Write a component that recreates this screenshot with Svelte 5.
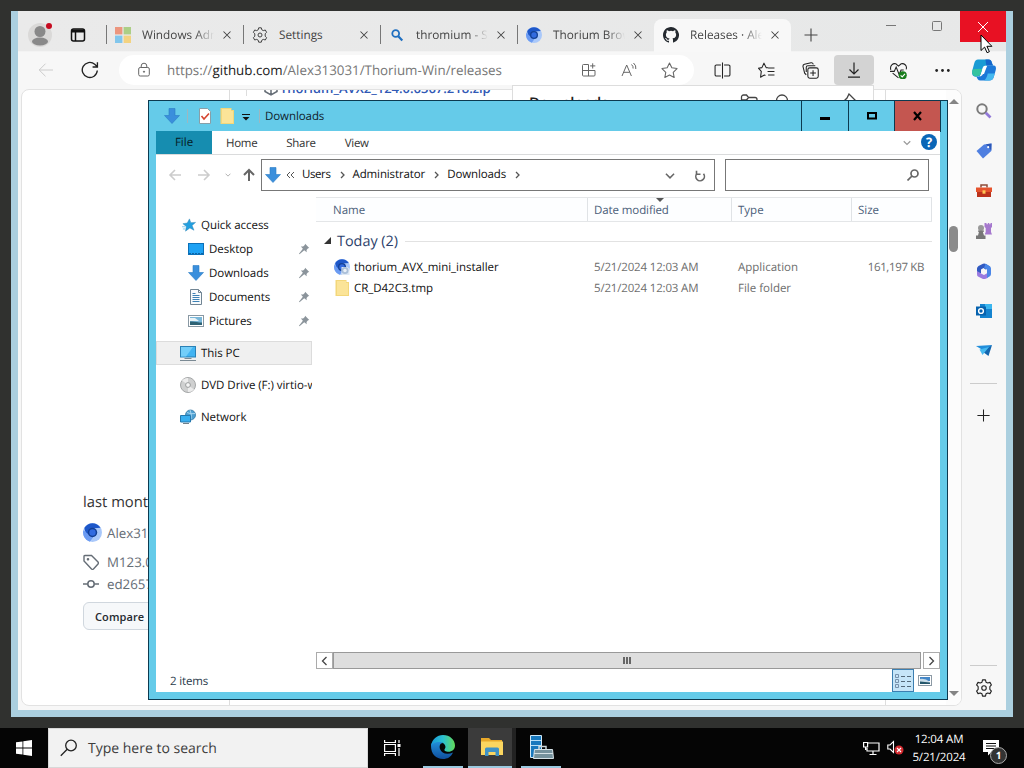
<script>
  const tabs = [
    { title: 'Windows Adm', icon: 'windows' },
    { title: 'Settings', icon: 'gear' },
    { title: 'thromium - Se', icon: 'bing' },
    { title: 'Thorium Brow', icon: 'thorium' },
    { title: 'Releases · Ale', icon: 'github', active: true }
  ];

  const sidebarApps = ['search', 'tag', 'toolbox', 'games', 'office', 'outlook', 'drop'];

  const quickAccess = [
    { label: 'Desktop', icon: 'desktop' },
    { label: 'Downloads', icon: 'arrow' },
    { label: 'Documents', icon: 'document' },
    { label: 'Pictures', icon: 'picture' }
  ];

  const places = [
    { label: 'This PC', icon: 'pc', selected: true },
    { label: 'DVD Drive (F:) virtio-win', icon: 'disc' },
    { label: 'Network', icon: 'network' }
  ];

  const crumbs = ['Users', 'Administrator', 'Downloads'];

  const files = [
    { name: 'thorium_AVX_mini_installer', date: '5/21/2024 12:03 AM', type: 'Application', size: '161,197 KB', icon: 'installer' },
    { name: 'CR_D42C3.tmp', date: '5/21/2024 12:03 AM', type: 'File folder', size: '', icon: 'folder' }
  ];
</script>

{#snippet icon(name, size = 16)}
  <svg class="icon" width={size} height={size} viewBox="0 0 16 16" fill="none" stroke="currentColor">
    {#if name === 'windows'}
      <g stroke="none" opacity="0.65">
        <path fill="#ee6a45" d="M0 0h7.4v7.4H0z" /><path fill="#8cc152" d="M8.6 0H16v7.4H8.6z" />
        <path fill="#4bb4ee" d="M0 8.6h7.4V16H0z" /><path fill="#f9c74a" d="M8.6 8.6H16V16H8.6z" />
      </g>
    {:else if name === 'gear'}
      <circle cx="8" cy="8" r="2" />
      <path d="M6.7.8h2.6l.5 2 1.5.8 2-.6 1.3 2.3L13.2 6.8v2.4l1.4 1.5-1.3 2.300-2-.6-1.500.8-.5 2H6.700l-.5-2-1.500-.8-2 .6-1.300-2.300 1.400-1.500V6.800L1.400 5.300 2.700 3l2 .6 1.500-.8z" stroke-linejoin="round" />
    {:else if name === 'bing'}
      <g stroke="#1f6fc0" stroke-width="1.8"><circle cx="6.7" cy="6.5" r="3.4" /><path d="M9.3 9.2l4 4.2" stroke-width="2.2" /></g>
    {:else if name === 'thorium' || name === 'installer'}
      <g stroke="none">
        <circle cx="8" cy="8" r="8" fill="#a9c8fa" />
        <path fill="#1d57c9" d="M1.2 4A8 8 0 0 1 14.8 4L9 4.5A4 4 0 0 0 5 10.5 8 8 0 0 1 1.2 4z" />
        <path fill="#6b9bf2" d="M.3 6a8 8 0 0 0 5.5 9.7L8.5 12 4.5 9.5z" />
        <circle cx="8" cy="8" r="4" fill="#123f94" /><circle cx="8" cy="8" r="2.7" fill="#326be0" />
        {#if name === 'installer'}
          <path fill="#dfe9f5" d="M7.5 8h6l2 2v6h-8z" />
          <circle cx="11" cy="11.5" r="3.5" fill="#aabfd8" /><circle cx="11" cy="11.5" r="1.7" fill="#e9f0f8" />
        {/if}
      </g>
    {:else if name === 'github'}
      <path fill="#24292f" stroke="none" d="M8 0C3.580 0 0 3.580 0 8c0 3.540 2.290 6.530 5.470 7.590.4.070.550-.170.550-.380 0-.190-.010-.820-.010-1.490-2.010.370-2.530-.490-2.690-.940-.090-.230-.480-.940-.820-1.130-.280-.150-.680-.520-.010-.530.630-.010 1.080.580 1.230.820.720 1.210 1.870.870 2.330.660.070-.520.280-.870.510-1.070-1.780-.200-3.640-.890-3.640-3.950 0-.870.310-1.590.820-2.150-.080-.200-.360-1.020.080-2.120 0 0 .670-.210 2.200.820a7.600 7.600 0 0 1 4 0c1.530-1.040 2.200-.820 2.200-.820.440 1.100.160 1.920.080 2.120.510.560.820 1.270.820 2.150 0 3.070-1.870 3.750-3.650 3.950.290.250.540.730.540 1.480 0 1.070-.010 1.930-.010 2.200 0 .210.150.460.550.380A8 8 0 0 0 8 0z" />
    {:else if name === 'close'}
      <path d="M4 4l8 8M12 4l-8 8" stroke-width="1.200" />
    {:else if name === 'plus'}
      <path d="M8 1.5v13M1.5 8h13" stroke-width="1.100" />
    {:else if name === 'back'}
      <path d="M15 8H1.200M7.500 1.700L1.200 8l6.300 6.300" />
    {:else if name === 'reload'}
      <path d="M14.5 8.5a6.700 6.700 0 1 1-2.300-5.600l2.100 2M14.600 1v4.300h-4.300" stroke-width="1.200" />
    {:else if name === 'lock'}
      <path d="M5.2 5.500V4a2.800 2.800 0 0 1 5.600 0v1.500" /><rect x="2.7" y="5.5" width="10.6" height="8.5" rx="1.5" /><circle cx="8" cy="9.7" r=".6" fill="currentColor" />
    {:else if name === 'apps'}
      <path d="M7.500 2.500H2.500a1 1 0 0 0-1 1v9.500a1 1 0 0 0 1 1h10.500a1 1 0 0 0 1-1V8.500H1.500M7.500 2.500V14M11.700 1.300v5.200M9.100 3.900h5.200" />
    {:else if name === 'read'}
      <path d="M1 14L5.700 3l4.700 11M2.700 10.300h6M10.500 2.500q2 1.800 1.600 4M12.500 1q3 2.600 2.300 6" />
    {:else if name === 'star'}
      <path d="M8 1l2.200 4.500 4.900.7-3.600 3.500.9 4.900L8 12.300l-4.400 2.300.9-4.900L.9 6.200l4.900-.7z" stroke-linejoin="round" />
    {:else if name === 'split'}
      <path d="M6.500 2.800H2.200A1.200 1.200 0 0 0 1 4v8a1.200 1.200 0 0 0 1.200 1.200h4.300M9.500 2.800h4.300A1.200 1.200 0 0 1 15 4v8a1.200 1.200 0 0 1-1.200 1.200H9.500M8 .5v15" />
    {:else if name === 'favorites'}
      <path d="M9.500 5.500L7.700 5.300 5.600 1.100 3.700 5.300l-3.300.5 2.700 3L2.400 14.300 6 12.200l1 .5M9.500 5.700h6M9 9h6.500M9.500 12.300h6" stroke-linejoin="round" />
    {:else if name === 'collections'}
      <rect x="5.5" y="5.5" width="9.8" height="9.8" rx="1.8" /><path d="M10.400 7.700v5.400M7.700 10.400h5.400M4 12L2.500 10.500 1 4.500Q.6 2.700 2.300 2.200L8.500.7Q10 .4 10.700 2.200M4 9.500V5Q4 3.500 5.500 3.500H12.500" />
    {:else if name === 'download'}
      <path d="M8 .5v11.300M3.500 7.500L8 12l4.500-4.500M2 15.200h12" stroke-width="1.200" />
    {:else if name === 'heart'}
      <path d="M.8 7.500C-.5 3 3 1 5.500 1.700L8 3.800l2.500-2.100C13 1 16.500 3 15.200 7M2.500 10.500L8 15M0 8.800h4l1.800-4 2.800 7 1.800-4.200h2.500" />
      <circle cx="12" cy="12.5" r="3.8" fill="#187d1c" stroke="none" /><path stroke="#fff" d="M10 12.500l1.500 1.500 2.600-2.800" />
    {:else if name === 'more'}
      <g fill="currentColor" stroke="none"><circle cx="2.500" cy="8" r="1.300" /><circle cx="8" cy="8" r="1.300" /><circle cx="13.500" cy="8" r="1.300" /></g>
    {:else if name === 'copilot'}
      <g stroke="none">
        <path fill="#199bd4" d="M4 1h7c1.500 0 2 1 2.300 2.300L14 5H9.500C7 5 7 7 6.300 9.500 5.500 12 5 12.500 3 12.500 0 12.500-.3 10.500.3 8L1.500 3.500C2 1.800 2.700 1 4 1z" />
        <path fill="#34c3a0" d="M.3 8c.6-1 2.500-.5 4.500-.8L6.800 7.500 5.300 11.500C1 13.500-.4 11 .3 8z" />
        <path fill="#1465cc" d="M9 1h2c1.500 0 2 1 2.300 2.300L14 5H9.500z" />
        <path fill="#1b78d8" d="M10 5h4.500c1.500 0 1.700 1.500 1.300 3.200l-1.300 4.500c-.4 1.600-1.500 2.300-3 2.300H5.500c-1.500 0-2-1.300-2.500-2.500 2.500 0 4-.3 4.800-3z" />
        <path fill="#45b9ef" d="M10.500 10.300h4.700l-.7 2.400c-.4 1.600-1.500 2.300-3 2.300H8c1.500-1 2-2.700 2.500-4.700z" />
        <path fill="#fff" d="M8 5.300h2L8 10.700H6z" />
      </g>
    {:else if name === 'search'}
      <circle cx="6" cy="6" r="4.700" stroke="#7b7b7b" stroke-width="2" /><path d="M9.700 9.700l4.800 4.800" stroke="#9279d8" stroke-width="2.700" />
    {:else if name === 'tag'}
      <path fill="#4f7fe0" stroke="none" d="M8 1.500L15.500.5 15.300 8 7 15.500.5 8z" /><path fill="#2c58b8" stroke="none" d="M10 1.200l5.500-.7-.2 7z" /><circle cx="12.200" cy="4.200" r="1.100" fill="#fff" stroke="none" />
    {:else if name === 'toolbox'}
      <path d="M5 4.500V2h6v2.500" stroke="#8e4b38" stroke-width="1.500" /><path fill="#e5532d" stroke="none" d="M0 4.500h16V9H0z" /><path fill="#bb321c" stroke="none" d="M1 9h14v5H1z" /><path fill="#ffc655" stroke="none" d="M6.500 7.300h3v3.400h-3z" />
    {:else if name === 'games'}
      <g stroke="none"><path fill="#a678ce" d="M8.500 0h2v1.200h1.300V0h1.500v1.200h1.200V0H16v4l-1 1v4l1 2.500H8.700l1-2.500V5L8.500 4z" /><circle cx="5" cy="5" r="3" fill="#999" /><path fill="#777" d="M2 7.500h6v1.300H6.800L8 12.500h1.500V16H0v-3.500h2l1-3.700H2z" /></g>
    {:else if name === 'office'}
      <g stroke="none"><path fill="#315ac1" d="M1 9V5.500Q1 4 2.500 3L7 .7Q8.500 0 10 1l4.500 3-5 2.500L7.500 5 5 6.500v4z" /><path fill="#9a7be0" d="M1 8l4 2.500L8 12l3.500-2V15L9 16H7l-5-2.500Q1 13 1 11z" /><path fill="#4a86e8" d="M9.500.7l4 2.300Q15 4 15 5.500V11q0 1.500-1.500 2.500L11 15V6.500L8 5z" /></g>
    {:else if name === 'outlook'}
      <g stroke="none"><path fill="#3ab6ef" d="M4 1h12v14H4z" /><path fill="#1483cf" d="M4 1h5v5h7v9H4z" /><path fill="#0662ae" d="M0 3.500h10v9H0z" /></g><circle cx="5" cy="8" r="2.400" stroke="#fff" stroke-width="1.400" />
    {:else if name === 'drop'}
      <g stroke="none"><path fill="#218edb" d="M0 3l16-1-6 7z" /><path fill="#1265ae" d="M16 2l-3.500 11-5.500-4z" /><path fill="#46b9f0" d="M3.500 6.500L13 4l-6.500 8z" /></g>
    {:else if name === 'arrow'}
      <path fill="#3a8fdc" stroke="#2a7cc5" stroke-width=".6" d="M5 .5h6v7h4.500L8 15.500.5 7.500H5z" />
    {:else if name === 'desktop'}
      <rect x=".5" y="2.500" width="15" height="11" fill="#1ea2f4" stroke="#0b70b8" /><path d="M1 12.500h14" stroke="#0d65a6" stroke-dasharray="2 1" />
    {:else if name === 'document'}
      <path fill="#f8fbfd" stroke="#718594" d="M2.500.5h8l3 3v12h-11z" /><path stroke="#3e82b6" d="M4.500 4.500h3M4.500 6.500h7M4.500 8.500h7M4.500 10.500h7M4.500 12.500h7" /><path stroke="#718594" d="M10.500.5v3h3" />
    {:else if name === 'picture'}
      <rect x=".5" y="2.500" width="15" height="11" fill="#fff" stroke="#8998a3" /><path fill="#79b6d8" stroke="none" d="M2 4h12v8H2z" /><path fill="#e9f3f7" stroke="none" d="M2 5h5l4 3H2z" /><path fill="#2e6274" stroke="none" d="M2 8.500c5-.5 7 1 12 1V12H2z" />
    {:else if name === 'pc'}
      <rect x=".5" y="1.500" width="15" height="10.500" fill="#42b4f2" stroke="#2b81b5" /><path fill="#73cef9" stroke="none" d="M1 2h12L6 11.500H1z" /><path stroke="#7b8a94" d="M4.500 13.500h7M0 15.500h16" />
    {:else if name === 'disc'}
      <circle cx="8" cy="8" r="7.500" fill="#cfd0d0" stroke="#a5a7a8" /><path fill="#ececec" stroke="none" d="M8 8L2 3.500A7 7 0 0 1 8 1zM8 8l6 4.500A7 7 0 0 1 8 15z" /><circle cx="8" cy="8" r="2.400" fill="#f6f6f6" stroke="#9b9d9e" />
    {:else if name === 'network'}
      <circle cx="10.500" cy="6" r="5" fill="#4ea0d2" stroke="#3579a5" stroke-width=".8" /><path stroke="#a9d6f0" d="M7 3.500q4 2 8 1M10 1q2 4 1 9" /><path fill="#39aff0" stroke="#2578ae" d="M.5 6.500h10v6.500H.5z" /><path stroke="#70818c" d="M3 14.500h6" />
    {:else if name === 'quick'}
      <path fill="#239fdf" stroke="#2680b3" stroke-width=".5" d="M8.500 1l1.600 4.300 5.400-.3-4 3.500 2.200 5.500-4.700-2.600L4 15l1-5.300L1 6.500l5-.8z" /><path stroke="#7fc7eb" d="M0 10h4M1 12.500h3" />
    {:else if name === 'folder'}
      <path fill="#f3d77a" stroke="none" d="M1.500 0h11v2H15v14h-13.500z" /><path fill="#fbe498" stroke="none" d="M3 1h9v2h2v12H3z" />
    {:else if name === 'properties'}
      <path fill="#fff" stroke="#889fa8" d="M2.500.5h8l3 3v12h-11z" /><path stroke="#d6442f" stroke-width="1.600" d="M4.500 8l2.500 3 5-5.500" />
    {:else if name === 'pin'}
      <path fill="#8b949b" stroke="none" d="M9.500 1l5.500 5.500-1.600.5-2 2.200.2 3L8.300 9.500 2 15l-.7-.7L6.500 7.500 3.800 4.600l3-.1 2.200-2z" />
    {:else if name === 'chevron'}
      <path d="M3.500 5.500L8 10l4.500-4.500" stroke-width="2" />
    {:else if name === 'chevron-wide'}
      <path d="M1.500 4.500L8 11l6.500-6.500" stroke-width="2.400" />
    {/if}
  </svg>
{/snippet}

<div class="desktop">
  <div class="browser">
    <div class="tabstrip">
      <span class="avatar">
        <svg width="26" height="26" viewBox="0 0 26 26">
          <circle cx="13" cy="13" r="12" fill="#dad9d8" />
          <circle cx="13" cy="9.500" r="5.500" fill="#898989" /><ellipse cx="13" cy="19.500" rx="8" ry="4" fill="#898989" />
          <circle cx="22" cy="4" r="3" fill="#c60b20" />
        </svg>
      </span>
      <svg class="workspaces" width="16" height="16" viewBox="0 0 16 16" fill="none" stroke="#111" stroke-width="1.500">
        <rect x="1.500" y="2" width="13" height="12" rx="2" /><path d="M2 4h12" stroke-width="3" /><path d="M5.500 5v9" />
      </svg>
      {#each tabs as tab}
        <div class="tab" class:active={tab.active}>
          {@render icon(tab.icon)}
          <span class="tab-title" class:whole={tab.title === 'Settings'}>{tab.title}</span>
          {@render icon('close', 14)}
        </div>
      {/each}
      <span class="new-tab">{@render icon('plus')}</span>
      <div class="window-buttons">
        <span><svg width="12" height="12" stroke="#777"><path d="M1 4.500h10" /></svg></span>
        <span><svg width="12" height="12" fill="none" stroke="#777"><rect x="1.500" y="0.500" width="9" height="9" rx="1" /></svg></span>
        <span class="close-red"><svg width="12" height="12" stroke="#fff"><path d="M1 1l10 10M11 1L1 11" /></svg></span>
      </div>
    </div>

    <div class="toolbar">
      <span class="tool back">{@render icon('back')}</span>
      <span class="tool reload">{@render icon('reload', 18)}</span>
      <div class="omnibox">
        {@render icon('lock')}
        <span class="url">https://<b>github.com</b>/Alex313031/Thorium-Win/releases</span>
        <span class="omni-actions">
          {@render icon('apps')}
          {@render icon('read')}
          {@render icon('star', 17)}
        </span>
      </div>
      <div class="tools">
        {#each ['split', 'favorites', 'collections', 'download', 'heart', 'more'] as tool}
          <span class="tool" class:pressed={tool === 'download'}>{@render icon(tool, tool === 'download' ? 16 : 17)}</span>
        {/each}
      </div>
      <span class="copilot">{@render icon('copilot', 24)}</span>
    </div>

    <div class="browser-body">
      <div class="page">
        <aside class="release-meta">
          <div class="age">last month</div>
          <div class="meta author">{@render icon('thorium', 19)}<span>Alex313031</span></div>
          <div class="meta tagged">
            <svg width="16" height="16" viewBox="0 0 16 16" fill="none" stroke="#656d76" stroke-width="1.400"><path d="M1 2.500V7l7.500 8q1 .8 2 0l4.500-5q.7-1 0-2L8.500 1.500H2.500Q1 1.300 1 2.500z" /><circle cx="5" cy="5.300" r=".6" /></svg>
            <span>M123.0.6312.133</span>
          </div>
          <div class="meta commit">
            <svg width="16" height="16" viewBox="0 0 16 16" fill="none" stroke="#656d76" stroke-width="1.500"><circle cx="8" cy="8" r="3.200" /><path d="M0 8h4.800M11.200 8H16" /></svg>
            <span>ed26573</span>
          </div>
          <button class="compare">Compare</button>
        </aside>
        <main class="release">
          <div class="assets">
            <svg width="16" height="16" viewBox="0 0 16 16" fill="none" stroke="#656d76" stroke-width="1.500"><path d="M8 1l6 3.500v7L8 15l-6-3.500v-7zM2 4.500L8 8l6-3.500M8 8v7" /></svg>
            <span class="asset-link">Thorium_AVX2_124.0.6367.218.zip</span>
          </div>
        </main>
        <div class="page-scroll">
          <i class="scroll-up"></i>
          <i class="thumb"></i>
          <i class="scroll-down"></i>
        </div>
      </div>
      <nav class="app-bar">
        {#each sidebarApps as app}
          <span class="app">{@render icon(app)}</span>
        {/each}
        <hr class="first" />
        <span class="app">{@render icon('plus', 15)}</span>
        <hr class="last" />
        <span class="app settings">{@render icon('gear', 18)}</span>
      </nav>
    </div>

    <div class="flyout">
      <span>Downloads</span>
      <svg class="fly-folder" width="18" height="16" fill="none" stroke="#444" stroke-width="1.300"><path d="M1.500 3a2 2 0 0 1 2-2h3l2 2.500h6.500a2 2 0 0 1 2 2V14h-15.500zM1.500 6h5l2-2.500" /></svg>
      <svg class="fly-search" width="14" height="16" fill="none" stroke="#444" stroke-width="1.300"><circle cx="7" cy="6.500" r="5.500" /></svg>
      <svg class="fly-pin" width="14" height="16" fill="none" stroke="#444" stroke-width="1.300"><path d="M1 8l3-3 2-4 6 6-3 3" /></svg>
    </div>
  </div>

  <div class="explorer">
    <div class="titlebar">
      {@render icon('arrow')}
      <i class="sep"></i>
      {@render icon('properties')}
      {@render icon('folder')}
      <svg class="menu-caret" width="8" height="8"><path d="M0 1.500h8" stroke="#111" /><path d="M.5 4h7L4 7.500z" fill="#111" /></svg>
      <i class="sep"></i>
      <span class="title">Downloads</span>
      <div class="caption-buttons">
        <span class="min"><svg width="12" height="10"><path d="M1 7.500h10" stroke="#000" stroke-width="3" /></svg></span>
        <span class="max"><svg width="12" height="10" fill="none"><rect x="2" y="2" width="8" height="5.500" stroke="#000" stroke-width="2" /></svg></span>
        <span class="close"><svg width="12" height="10"><path d="M2 1l7 8M9 1L2 9" stroke="#000" stroke-width="2.200" /></svg></span>
      </div>
    </div>

    <div class="content">
      <div class="menu">
        <span class="file">File</span>
        <span class="home">Home</span>
        <span class="share">Share</span>
        <span class="view">View</span>
        <span class="expand">{@render icon('chevron-wide', 8)}</span>
        <span class="help">?</span>
      </div>

      <div class="nav-row">
        <svg width="14" height="12" fill="none" stroke="#ccc" stroke-width="1.600"><path d="M13 6H2M7 1L2 6l5 5" /></svg>
        <svg class="forward" width="14" height="12" fill="none" stroke="#ccc" stroke-width="1.600"><path d="M1 6h11M7 1l5 5-5 5" /></svg>
        <span class="history">{@render icon('chevron-wide', 6)}</span>
        <svg class="parent" width="12" height="14" fill="none" stroke="#666" stroke-width="2"><path d="M6 13V2M1 7l5-5 5 5" /></svg>
        <div class="address">
          {@render icon('arrow')}
          <svg class="laquo" width="9" height="8" fill="none" stroke="#555"><path d="M4 1L1 4l3 3M8 1L5 4l3 3" /></svg>
          {#each crumbs as crumb}
            <span class="crumb">{crumb}</span>
            <svg class="crumb-arrow" width="6" height="8" fill="none" stroke="#555" stroke-width="1.300"><path d="M1 1l3 3-3 3" /></svg>
          {/each}
          <span class="addr-right">
            {@render icon('chevron-wide', 10)}
            <svg width="12" height="12" fill="none" stroke="#666" stroke-width="1.600"><path d="M3 3.500a4.300 4.300 0 1 0 6.500.3M2.500.800v3.500h4" /></svg>
          </span>
        </div>
        <div class="search-box">
          <svg width="12" height="12" fill="none" stroke="#666" stroke-width="1.700"><circle cx="7.500" cy="4.500" r="3.500" /><path d="M5 7l-4.500 4.500" /></svg>
        </div>
      </div>

      <div class="panes">
        <nav class="tree">
          <div class="node">{@render icon('quick', 14)}<span class="label">Quick access</span></div>
          {#each quickAccess as item}
            <div class="node child">
              {@render icon(item.icon)}
              <span class="label">{item.label}</span>
              <span class="pin">{@render icon('pin', 12)}</span>
            </div>
          {/each}
          {#each places as place}
            <div class="node place" class:selected={place.selected}>
              {@render icon(place.icon)}
              <span class="label">{place.label}</span>
            </div>
          {/each}
        </nav>

        <div class="list">
          <div class="columns header">
            <span>Name</span>
            <span class="sorted">Date modified</span>
            <span>Type</span>
            <span>Size</span>
          </div>
          <div class="group">
            <svg width="7" height="7"><path d="M7 0v7H0z" fill="#333" /></svg>
            <span>Today (2)</span>
            <i></i>
          </div>
          {#each files as file}
            <div class="columns row">
              <span class="name">{@render icon(file.icon)}<span class="filename">{file.name}</span></span>
              <span class="date">{file.date}</span>
              <span>{file.type}</span>
              <span class="size">{file.size}</span>
            </div>
          {/each}
          <div class="hscroll">
            <span class="arrow-btn"><svg width="7" height="10" fill="none" stroke="#444" stroke-width="1.300"><path d="M5.500 1l-4 4 4 4" /></svg></span>
            <span class="bar"><i></i><i></i><i></i></span>
            <span class="arrow-btn right"><svg width="7" height="10" fill="none" stroke="#444" stroke-width="1.300"><path d="M1.500 1l4 4-4 4" /></svg></span>
          </div>
        </div>
      </div>

      <div class="status">
        <span class="count">2 items</span>
        <span class="view-btn">
          <svg width="16" height="14" fill="none" stroke="#7791ac"><path d="M.5.5h3v3h-3zM.5 5.500h3v3h-3zM.5 10.500h3v3h-3z" /><path stroke="#546878" d="M6 2.500h4M12 2.500h4M6 7.500h4M12 7.500h4M6 12.500h4M12 12.500h4" /></svg>
        </span>
        <span class="thumb-btn">
          <svg width="14" height="11"><rect x=".5" y=".5" width="13" height="10" fill="#fff" stroke="#8d9aa5" /><path fill="#4487c8" d="M2 2h10v4H2z" /><path fill="#c8dce8" d="M2 4q5-1 10 3v1H2z" /><path fill="#25566b" d="M2 6.500l10 1V9H2z" /></svg>
        </span>
      </div>
    </div>
  </div>

  <div class="taskbar">
    <span class="start"><svg width="16" height="16" fill="#fff"><path d="M0 2.300l6.500-.9v6.200H0zM7.300 1.300L16 0v7.600H7.300zM0 8.400h6.500v6.200L0 13.700zM7.300 8.400H16V16l-8.700-1.300z" /></svg></span>
    <div class="task-search">
      <svg width="18" height="18" fill="none" stroke="#222" stroke-width="1.300"><circle cx="11" cy="6.500" r="5.300" /><path d="M7.200 10.300L.8 16.700" /></svg>
      <span>Type here to search</span>
    </div>
    <span class="task taskview"><svg width="17" height="16" fill="none" stroke="#fff" stroke-width="1.200"><path d="M.6 0v2.500h10.800V0M.6 16v-2.500h10.800V16M.6 4.500h10.800v7H.6zM15 0v3M15 8v8" /><path d="M13.500 5.500h3" stroke-width="3" /></svg></span>
    <span class="task open edge">
      <svg width="26" height="26" viewBox="0 0 26 26">
        <defs>
          <linearGradient id="edgeTop" x1="0" x2="1"><stop stop-color="#1899d9" /><stop offset=".5" stop-color="#2bbfd0" /><stop offset="1" stop-color="#63dc59" /></linearGradient>
          <linearGradient id="edgeLow" x1="0" y1="0" x2="0" y2="1"><stop stop-color="#2392dc" /><stop offset="1" stop-color="#0f4f9e" /></linearGradient>
        </defs>
        <path fill="url(#edgeLow)" d="M1 12C1 7 9 5 13 9c-3 0-4 3-3 6 1.500 4.500 7 6 13 3.500C21 23 17.500 25 13 25 6 25 1 20 1 12z" />
        <path fill="url(#edgeTop)" d="M1 12C2 5 7 1 13 1c7 0 12 5 12 10.500 0 5-4.500 7-8.500 6-2.500-.6-2.500-1.800-1.500-3 1.500-2-.5-6-5-6.500-4-.4-8 1.500-9 4z" />
      </svg>
    </span>
    <span class="task open current">
      <svg width="22" height="20"><path fill="#e8a92a" d="M0 1h8l2 2h11v15H0z" /><path fill="#fbd660" d="M0 4.500h22V18H0z" /><path fill="#3f92c5" d="M4 12q0-1.500 1.500-1.500h11Q18 10.500 18 12v7h-3.500v-4h-7v4H4z" /></svg>
    </span>
    <span class="task open server">
      <svg width="25" height="25"><path fill="#1878bd" stroke="#cfe8f7" d="M1.500.5h11v22h-11z" /><path stroke="#b8def5" d="M2 5.500h10M2 10.500h10" /><path fill="none" stroke="#cbd7dc" stroke-width="1.500" d="M10 14v-2.500h7V14" /><path fill="#76929d" stroke="#d5e1e6" d="M5.500 14.500h18l1 9h-20z" /><path stroke="#d5e1e6" d="M5 18.500h19" /></svg>
    </span>
    <div class="tray">
      <svg width="17" height="15" fill="none" stroke="#fff" stroke-width="1.200"><path d="M5 2h11v8H4V7M10 10v3.500M6.500 13.500h7M.6 1.500h4v4.500h-4zM2.600 6v3" /></svg>
      <svg class="volume" width="17" height="16" fill="none" stroke="#fff" stroke-width="1.100"><path d="M.8 5H3l3.500-3.500v11L3 9H.8z" /><circle cx="12" cy="10" r="4.500" fill="#d42b30" stroke="none" /><path d="M10 8l4 4M14 8l-4 4" /></svg>
      <div class="clock">
        <span>12:04 AM</span>
        <span>5/21/2024</span>
      </div>
      <span class="notifications">
        <svg width="17" height="17"><path fill="#fff" d="M0 0h16v12H8.500L5 15.500V12H0z" /><path stroke="#111" d="M3 3.500h10M3 6h10M3 8.500h10" /></svg>
        <b>1</b>
      </span>
    </div>
  </div>

  <svg class="cursor" width="13" height="20" viewBox="0 0 13 20"><path d="M1 1v15.500l3.600-3.400 2.500 5.600 2.300-1-2.500-5.400h5z" fill="#fff" stroke="#000" /></svg>
</div>

<style>
  :global(body) {
    margin: 0;
    overflow: hidden;
  }

  .desktop {
    position: relative;
    width: 1024px;
    height: 768px;
    overflow: hidden;
    background: #30312f;
    font-family: "Open Sans", "Noto Sans", sans-serif;
    font-size: 11.5px;
    line-height: 16px;
    color: #111;
    white-space: nowrap;
    text-rendering: geometricPrecision;
  }

  .desktop :global(*) {
    box-sizing: border-box;
  }

  svg {
    display: block;
    flex: none;
  }

  /* Browser window */
  .browser {
    position: absolute;
    left: 11px;
    top: 11px;
    width: 1002px;
    height: 706px;
    display: flex;
    flex-direction: column;
    border: solid #abcfdf;
    border-width: 0 7px 7px;
    background: #f7f7f7;
  }

  .tabstrip {
    display: flex;
    height: 41px;
    background: linear-gradient(90deg, #eaeaea, #e7e8e8);
    border-bottom: 1px solid #f3f3f3;
    color: #444;
  }

  .avatar {
    padding: 11px 0 0 9px;
    width: 52px;
  }

  .workspaces {
    margin: 16px 20px 0 0;
  }

  .tab {
    position: relative;
    display: flex;
    align-items: center;
    width: 137px;
    height: 33px;
    margin-top: 8px;
    padding: 0 9px 2px 9px;
  }

  .tab:not(.active)::before {
    content: "";
    position: absolute;
    left: 0;
    top: 6px;
    height: 19px;
    border-left: 1px solid #777;
  }

  .tab.active {
    background: #f8f8f8;
    border-radius: 8px 8px 0 0;
  }

  .tab-title {
    flex: 1;
    min-width: 0;
    margin: 0 6px 0 11px;
    overflow: hidden;
    font-size: 11.8px;
    mask-image: linear-gradient(90deg, #000 74%, transparent);
  }

  .tab-title.whole {
    mask-image: none;
  }

  .new-tab {
    padding: 16px 0 0 12px;
  }

  .window-buttons {
    display: flex;
    margin-left: auto;
  }

  .window-buttons span {
    display: flex;
    align-items: center;
    justify-content: center;
    width: 46px;
    height: 31px;
  }

  .window-buttons .close-red {
    background: #e81123;
  }

  .toolbar {
    display: flex;
    align-items: center;
    height: 36px;
  }

  .tool {
    display: flex;
    align-items: center;
    justify-content: center;
    width: 40px;
    height: 30px;
    color: #222;
  }

  .back {
    margin-left: 8px;
    color: #ccc;
  }

  .reload {
    width: 47px;
  }

  .omnibox {
    display: flex;
    align-items: center;
    width: 575px;
    height: 30px;
    margin-left: 6px;
    padding: 0 16px 0 17px;
    background: #fff;
    border-radius: 16px;
    color: #666;
  }

  .url {
    margin-left: 15px;
    font-size: 13.35px;
    color: #767676;
  }

  .url b {
    font-weight: 400;
    color: #1a1a1a;
  }

  .omni-actions {
    display: flex;
    gap: 24px;
    margin-left: auto;
  }

  .tools {
    display: flex;
    gap: 4px;
    margin-left: 8px;
  }

  .pressed {
    background: #d3d3d3;
    border-radius: 4px;
  }

  .copilot {
    margin-left: 10px;
  }

  .browser-body {
    display: flex;
    flex: 1;
    min-height: 0;
    padding-top: 1px;
  }

  .page {
    display: flex;
    width: 941px;
    margin: 0 0 4px 3px;
    overflow: hidden;
    background: #fff;
    border: 1px solid #e2e2e2;
    border-radius: 8px;
  }

  .release-meta {
    width: 208px;
    padding: 400px 0 0 61px;
    border-right: 1px solid #ddd;
    color: #656d76;
  }

  .age {
    font-size: 14.8px;
    line-height: 24px;
    color: #333;
  }

  .meta {
    display: flex;
    align-items: center;
    gap: 8px;
    height: 22px;
    font-size: 13.3px;
  }

  .author {
    gap: 5px;
    height: 37px;
  }

  .commit {
    margin-bottom: 7px;
  }

  .compare {
    width: 120px;
    height: 28px;
    padding: 0 11px;
    border: 1px solid #d0d7de;
    border-radius: 6px;
    background: #f6f8fa;
    font: 600 11px "Open Sans", sans-serif;
    letter-spacing: 0.1px;
    text-align: left;
    color: #24292f;
  }

  .release {
    display: flex;
    width: 656px;
    padding: 0 16px;
    border-right: 1px solid #ddd;
  }

  .assets {
    display: flex;
    align-items: center;
    gap: 1px;
    width: 100%;
    height: 16px;
    margin-top: -10px;
    padding-left: 16px;
    border-left: 1px solid #ddd;
  }

  .asset-link {
    font-size: 13px;
    font-weight: 600;
    color: #3159b5;
  }

  .page-scroll {
    display: flex;
    flex-direction: column;
    align-items: center;
    width: 15px;
    margin-left: auto;
    padding: 9px 0;
    background: #fcfcfc;
  }

  .scroll-up,
  .scroll-down {
    border: 5px solid transparent;
    border-top: 0;
    border-bottom-color: #858585;
  }

  .scroll-down {
    margin-top: auto;
    transform: rotate(180deg);
  }

  .thumb {
    width: 9px;
    height: 26px;
    margin-top: 122px;
    border-radius: 5px;
    background: #8b8b8b;
  }

  .app-bar {
    display: flex;
    flex-direction: column;
    align-items: center;
    flex: 1;
    padding: 2px 1px 0 0;
  }

  .app {
    display: flex;
    align-items: center;
    justify-content: center;
    height: 40px;
    color: #222;
  }

  hr {
    width: 27px;
    margin: 0;
    border: 0;
    border-top: 1px solid #ccc;
  }

  .first {
    margin: 12px 0 11px;
  }

  .last {
    margin-top: auto;
  }

  .settings {
    height: 44px;
  }

  .flyout {
    position: absolute;
    left: 494px;
    top: 74px;
    display: flex;
    width: 362px;
    height: 40px;
    padding: 7px 16px;
    border: 1px solid #ddd;
    background: #fff;
    font-size: 14.8px;
    font-weight: 600;
    line-height: 20px;
    color: #222;
  }

  .fly-folder {
    margin: 1px 17px 0 auto;
  }

  .fly-search {
    margin-top: 1px;
  }

  .fly-pin {
    margin: 0 0 0 54px;
  }

  /* File Explorer window */
  .explorer {
    position: absolute;
    left: 148px;
    top: 100px;
    display: flex;
    flex-direction: column;
    width: 800px;
    height: 600px;
    padding: 0 7px 7px;
    border: 1px solid #0c3a50;
    background: #65cbe9;
  }

  .titlebar {
    display: flex;
    align-items: center;
    height: 30px;
    padding-left: 8px;
    color: #10222b;
  }

  .sep {
    height: 14px;
    margin: 0 9px 0 7px;
    border-left: 1px solid #9eb7c0;
  }

  .titlebar .sep + :global(svg) {
    margin-right: 6px;
  }

  .menu-caret {
    margin: 2px 2px 0 7px;
  }

  .title {
    margin: 2px 0 0 -4px;
    letter-spacing: -0.08px;
  }

  .caption-buttons {
    display: flex;
    height: 31px;
    margin: 0 -1px 0 auto;
  }

  .caption-buttons span {
    display: flex;
    align-items: center;
    justify-content: center;
    border: solid #0c3a50;
    border-width: 0 0 1px 1px;
  }

  .caption-buttons .min {
    width: 47px;
  }

  .caption-buttons .max {
    width: 46px;
  }

  .caption-buttons .close {
    width: 47px;
    border-right-width: 1px;
    background: #c45650;
  }

  .content {
    display: flex;
    flex-direction: column;
    flex: 1;
    min-height: 0;
    background: #fff;
  }

  .menu {
    display: flex;
    align-items: center;
    height: 24px;
    border-bottom: 1px solid #dadbdc;
    letter-spacing: -0.3px;
    color: #333;
  }

  .file {
    width: 56px;
    height: 23px;
    line-height: 24px;
    background: #168db0;
    text-align: center;
    letter-spacing: 0;
    color: #061b24;
  }

  .home,
  .share,
  .view {
    margin: 2px 0 0 29px;
  }

  .home {
    margin-left: 14px;
  }

  .expand {
    margin: 0 10px 0 auto;
    color: #999;
  }

  .help {
    width: 16px;
    height: 16px;
    margin: -1px 3px 0 0;
    border-radius: 50%;
    background: #0a66b7;
    font-size: 13px;
    font-weight: 700;
    text-align: center;
    color: #fff;
  }

  .nav-row {
    display: flex;
    align-items: center;
    height: 40px;
    padding-left: 12px;
  }

  .forward {
    margin-left: 15px;
  }

  .history {
    margin: 0 12px 0 14px;
    color: #aaa;
  }

  .address {
    display: flex;
    align-items: center;
    width: 454px;
    height: 32px;
    margin: -1px 10px 0 6px;
    padding: 0 8px 0 3px;
    border: 1px solid #777;
  }

  .laquo {
    margin-left: 5px;
  }

  .crumb {
    margin: 0 9px 0 7px;
    letter-spacing: -0.12px;
  }

  .crumb:nth-of-type(1) {
    letter-spacing: -0.4px;
  }

  .addr-right {
    display: flex;
    align-items: center;
    gap: 19px;
    margin: 2px 0 0 auto;
    color: #666;
  }

  .search-box {
    display: flex;
    align-items: center;
    justify-content: flex-end;
    width: 204px;
    height: 32px;
    margin-top: -1px;
    padding-right: 9px;
    border: 1px solid #777;
  }

  .panes {
    display: flex;
    flex: 1;
    min-height: 0;
  }

  .tree {
    width: 160px;
    padding-top: 18px;
  }

  .node {
    display: flex;
    align-items: center;
    gap: 5px;
    width: 156px;
    height: 24px;
    padding-left: 26px;
    overflow: hidden;
  }

  .node.child {
    padding-left: 32px;
  }

  .label,
  .count {
    margin-top: 2px;
  }

  .label {
    letter-spacing: -0.04px;
  }

  .pin {
    margin: 0 2px 0 auto;
  }

  .place {
    margin-top: 8px;
    padding-left: 24px;
  }

  .place.selected {
    padding-left: 23px;
    border: 1px solid #dcdcdc;
    background: #f0f0f0;
  }

  .list {
    display: flex;
    flex-direction: column;
    width: 624px;
    padding-top: 2px;
  }

  .columns {
    display: grid;
    grid-template-columns: 272px 144px 120px 80px;
    width: 616px;
  }

  .header {
    height: 25px;
    border: 1px solid #e4e6e8;
    border-width: 1px 0;
    line-height: 25px;
    color: #4c607a;
    background: #fdfeff;
  }

  .header span {
    height: 23px;
    padding-left: 6px;
    border-right: 1px solid #e0e3e6;
  }

  .header span:first-child {
    padding-left: 17px;
  }

  .sorted {
    position: relative;
    letter-spacing: -0.1px;
  }

  .sorted::after {
    content: "";
    position: absolute;
    left: 68px;
    top: 0;
    border: 4px solid transparent;
    border-top-color: #555;
    border-bottom: 0;
  }

  .group {
    display: flex;
    align-items: center;
    height: 34px;
    padding: 4px 8px 0 8px;
    font-size: 14.4px;
    color: #2c3f6b;
  }

  .group svg {
    margin-top: -1px;
  }

  .group span {
    margin: 1px 7px 0 6px;
  }

  .group i {
    flex: 1;
    border-top: 1px solid #e2e2e2;
  }

  .row {
    height: 21px;
    line-height: 23px;
    color: #6d6d6d;
  }

  .row > span {
    height: 21px;
    padding-left: 6px;
  }

  .row .name {
    display: flex;
    align-items: center;
    gap: 4px;
    padding-left: 18px;
    letter-spacing: -0.04px;
    color: #111;
  }

  .filename {
    margin-top: 2px;
  }

  .date {
    letter-spacing: -0.17px;
  }

  .row .size {
    padding-right: 8px;
    text-align: right;
    letter-spacing: -0.36px;
  }

  .hscroll {
    display: flex;
    height: 17px;
    margin-top: auto;
  }

  .arrow-btn {
    display: flex;
    align-items: center;
    justify-content: center;
    width: 17px;
    border: 1px solid #ababab;
  }

  .arrow-btn.right {
    margin-left: 2px;
  }

  .bar {
    display: flex;
    align-items: center;
    justify-content: center;
    gap: 1px;
    flex: 1;
    border: 1px solid #999;
    background: #dedede;
  }

  .bar i {
    width: 2px;
    height: 7px;
    background: #666;
  }

  .status {
    display: flex;
    align-items: center;
    height: 23px;
    padding: 0 8px 0 14px;
    letter-spacing: -0.15px;
    color: #28394a;
  }

  .view-btn {
    display: flex;
    align-items: center;
    justify-content: center;
    width: 22px;
    height: 23px;
    margin: 0 4px 0 auto;
    border: 1px solid #3c7fb1;
    background: #c6e5f8;
  }

  /* Taskbar */
  .taskbar {
    position: absolute;
    left: 0;
    top: 728px;
    display: flex;
    width: 100%;
    height: 40px;
    background: #050505;
    color: #fff;
  }

  .start {
    width: 48px;
    padding: 12px 16px;
  }

  .task-search {
    display: flex;
    align-items: center;
    gap: 10px;
    width: 320px;
    padding-left: 11px;
    border: 1px solid #d8d8d8;
    background: #f2f2f2;
    font-size: 14px;
    color: #3d3d3d;
  }

  .task-search span {
    margin-top: 2px;
  }

  .task {
    display: flex;
    align-items: center;
    justify-content: center;
    width: 48px;
  }

  .open {
    width: 40px;
    border-bottom: 2px solid #9bc9df;
  }

  .edge {
    margin-left: 7px;
  }

  .current {
    width: 44px;
    margin: 0 4px 0 5px;
    padding-left: 3px;
    background: #3b3b3b;
    box-shadow: 4px 0 #222;
  }

  .server {
    margin-left: 5px;
  }

  .tray {
    display: flex;
    align-items: center;
    margin-left: auto;
    padding-right: 15px;
  }

  .volume {
    margin-left: 7px;
  }

  .clock {
    display: flex;
    flex-direction: column;
    align-items: center;
    width: 60px;
    margin: 2px 14px 0 5px;
    line-height: 18px;
    letter-spacing: -0.15px;
  }

  .notifications {
    position: relative;
    width: 26px;
  }

  .notifications b {
    position: absolute;
    left: 7px;
    top: 7px;
    width: 17px;
    height: 17px;
    border: 1px solid #aaa;
    border-radius: 50%;
    background: #333;
    font-size: 10px;
    line-height: 15px;
    text-align: center;
  }

  .cursor {
    position: absolute;
    left: 980px;
    top: 34px;
  }
</style>
